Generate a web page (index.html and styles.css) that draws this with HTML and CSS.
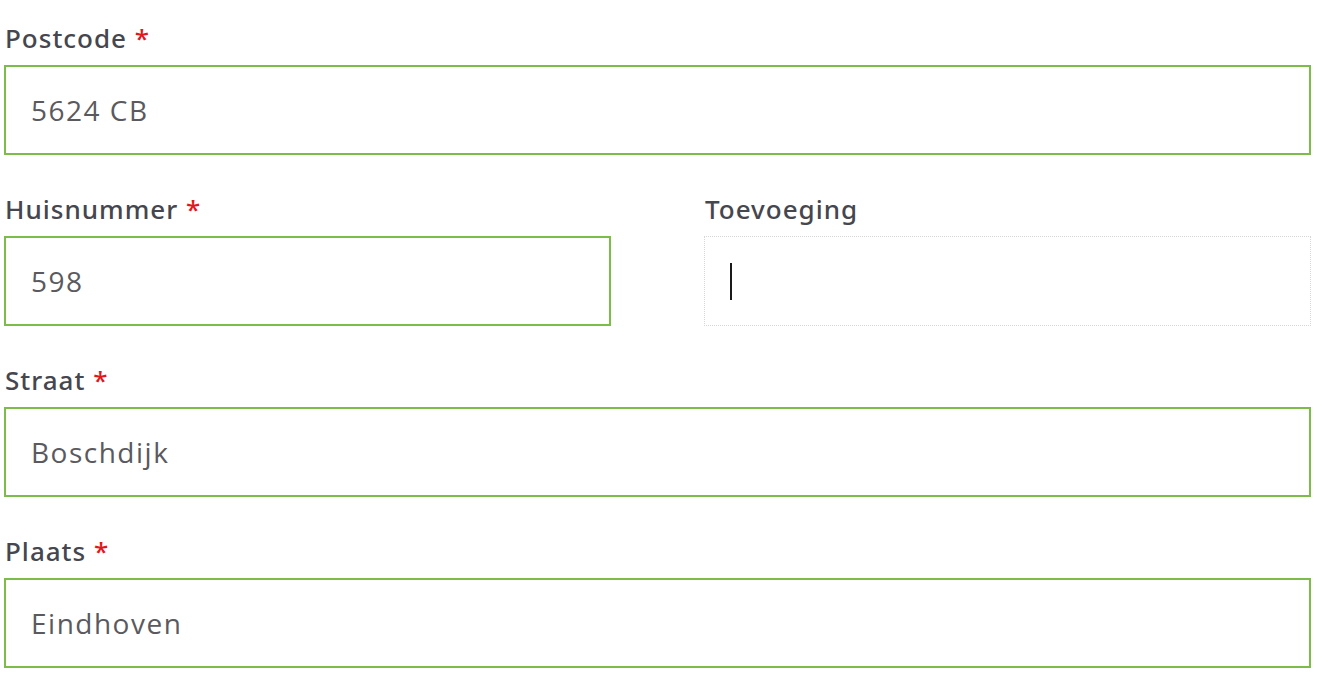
FILE: index.html
```html
<!DOCTYPE html>
<html lang="nl">
<head>
<meta charset="utf-8">
<title>Adres</title>
<link rel="stylesheet" href="styles.css">
</head>
<body>
<form class="form">
  <div class="field">
    <label class="label">Postcode <span class="req">*</span></label>
    <div class="input valid">5624 CB</div>
  </div>
  <div class="row">
    <div class="field">
      <label class="label">Huisnummer <span class="req">*</span></label>
      <div class="input valid">598</div>
    </div>
    <div class="field">
      <label class="label">Toevoeging</label>
      <div class="input focus"><span class="caret"></span></div>
    </div>
  </div>
  <div class="field">
    <label class="label">Straat <span class="req">*</span></label>
    <div class="input valid">Boschdijk</div>
  </div>
  <div class="field">
    <label class="label">Plaats <span class="req">*</span></label>
    <div class="input valid">Eindhoven</div>
  </div>
</form>
</body>
</html>
```

FILE: styles.css
```css
html, body {
  margin: 0;
  padding: 0;
  background: #ffffff;
}
body {
  font-family: "Open Sans", "Noto Sans", "Liberation Sans", sans-serif;
}
.form {
  width: 1307px;
  margin-left: 4px;
  padding-top: 18px;
  display: flex;
  flex-direction: column;
  gap: 34px;
}
.row {
  display: grid;
  grid-template-columns: 607px 607px;
  column-gap: 93px;
}
.field {
  display: flex;
  flex-direction: column;
  gap: 7px;
}
.label {
  display: block;
  height: 40px;
  line-height: 40px;
  font-family: "Noto Sans", "Open Sans", sans-serif;
  font-size: 26px;
  font-weight: 500;
  letter-spacing: 1px;
  color: #45464e;
  padding-left: 1px;
}
.req {
  color: #e2171b;
}
.input {
  box-sizing: border-box;
  height: 90px;
  display: flex;
  align-items: center;
  padding-left: 25px;
  font-size: 28px;
  letter-spacing: 1.5px;
  color: #5a5a5e;
}
.valid {
  border: 2px solid #7cbd4a;
}
.focus {
  border: 1px dotted #d6d6d6;
}
.caret {
  display: block;
  width: 2px;
  height: 37px;
  background: #1a1a1a;
}
```
